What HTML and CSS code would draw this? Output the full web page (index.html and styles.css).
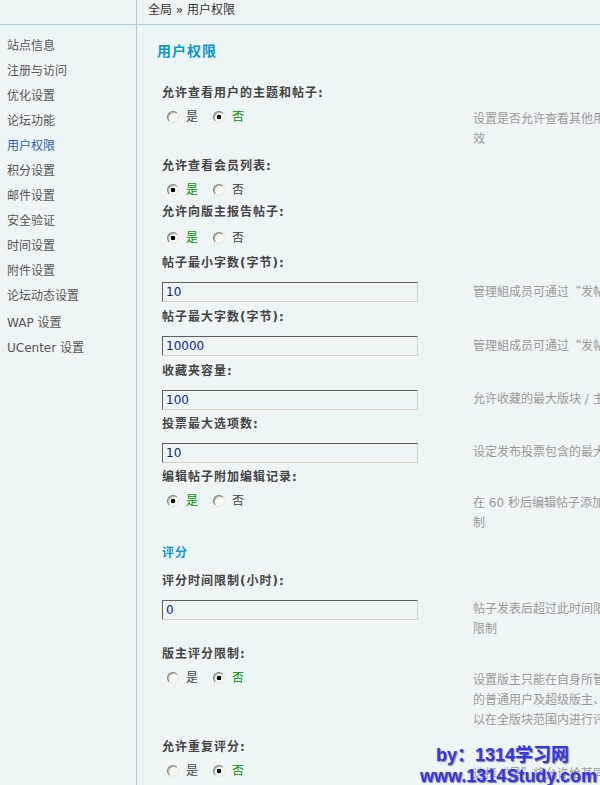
FILE: index.html
```html
<!DOCTYPE html>
<html lang="zh-CN">
<head>
<meta charset="utf-8">
<title>用户权限</title>
<link rel="stylesheet" href="styles.css">
</head>
<body>
<div class="layout">
  <aside class="side">
    <div class="side-top"></div>
    <ul class="menu">
      <li>站点信息</li>
      <li>注册与访问</li>
      <li>优化设置</li>
      <li>论坛功能</li>
      <li class="on">用户权限</li>
      <li>积分设置</li>
      <li>邮件设置</li>
      <li>安全验证</li>
      <li>时间设置</li>
      <li>附件设置</li>
      <li>论坛动态设置</li>
      <li class="wap">WAP 设置</li>
      <li>UCenter 设置</li>
    </ul>
  </aside>
  <main class="main">
    <div class="crumb">全局 &raquo; 用户权限</div>
    <div class="content">
      <h3 class="title">用户权限</h3>

      <div class="item">
        <div class="label">允许查看用户的主题和帖子:</div>
        <div class="row">
          <div class="value">
            <div class="radios">
              <label class="opt"><input type="radio" name="r1" class="radio"><span>是</span></label>
              <label class="opt"><input type="radio" name="r1" class="radio" checked><span>否</span></label>
            </div>
          </div>
          <div class="desc">设置是否允许查看其他用户的主题和帖子，本设置对管理员无效</div>
        </div>
      </div>

      <div class="item">
        <div class="label">允许查看会员列表:</div>
        <div class="row">
          <div class="value">
            <div class="radios">
              <label class="opt"><input type="radio" name="r2" class="radio" checked><span>是</span></label>
              <label class="opt"><input type="radio" name="r2" class="radio"><span>否</span></label>
            </div>
          </div>
          <div class="desc"></div>
        </div>
      </div>

      <div class="item extra">
        <div class="label">允许向版主报告帖子:</div>
        <div class="row">
          <div class="value">
            <div class="radios">
              <label class="opt"><input type="radio" name="r3" class="radio" checked><span>是</span></label>
              <label class="opt"><input type="radio" name="r3" class="radio"><span>否</span></label>
            </div>
          </div>
          <div class="desc"></div>
        </div>
      </div>

      <div class="item">
        <div class="label">帖子最小字数(字节):</div>
        <div class="row row-input">
          <div class="value"><input type="text" class="txt" value="10"></div>
          <div class="desc">管理組成员可通过<span class="lq">“</span>发帖不受限制<span class="rq">”</span>设置不受此限制</div>
        </div>
      </div>

      <div class="item">
        <div class="label">帖子最大字数(字节):</div>
        <div class="row row-input">
          <div class="value"><input type="text" class="txt" value="10000"></div>
          <div class="desc">管理組成员可通过<span class="lq">“</span>发帖不受限制<span class="rq">”</span>设置不受此限制</div>
        </div>
      </div>

      <div class="item">
        <div class="label">收藏夹容量:</div>
        <div class="row row-input">
          <div class="value"><input type="text" class="txt" value="100"></div>
          <div class="desc">允许收藏的最大版块 / 主题数，0 为不限制</div>
        </div>
      </div>

      <div class="item">
        <div class="label">投票最大选项数:</div>
        <div class="row row-input">
          <div class="value"><input type="text" class="txt" value="10"></div>
          <div class="desc">设定发布投票包含的最大选项数</div>
        </div>
      </div>

      <div class="item">
        <div class="label">编辑帖子附加编辑记录:</div>
        <div class="row">
          <div class="value">
            <div class="radios">
              <label class="opt"><input type="radio" name="r4" class="radio" checked><span>是</span></label>
              <label class="opt"><input type="radio" name="r4" class="radio"><span>否</span></label>
            </div>
          </div>
          <div class="desc">在 60 秒后编辑帖子添加编辑记录，管理员编辑帖子不受此限制</div>
        </div>
      </div>

      <div class="section">评分</div>

      <div class="item">
        <div class="label">评分时间限制(小时):</div>
        <div class="row row-input">
          <div class="value"><input type="text" class="txt" value="0"></div>
          <div class="desc">帖子发表后超过此时间限制将不能对此帖评分，设置为零则不限制</div>
        </div>
      </div>

      <div class="item">
        <div class="label">版主评分限制:</div>
        <div class="row">
          <div class="value">
            <div class="radios">
              <label class="opt"><input type="radio" name="r5" class="radio"><span>是</span></label>
              <label class="opt"><input type="radio" name="r5" class="radio" checked><span>否</span></label>
            </div>
          </div>
          <div class="desc">设置版主只能在自身所管辖的版块内进行评分，其他允许评分的普通用户及超级版主、管理员不受此项限制，上述用户均可以在全版块范围内进行评分</div>
        </div>
      </div>

      <div class="item">
        <div class="label">允许重复评分:</div>
        <div class="row">
          <div class="value">
            <div class="radios">
              <label class="opt"><input type="radio" name="r6" class="radio"><span>是</span></label>
              <label class="opt"><input type="radio" name="r6" class="radio" checked><span>否</span></label>
            </div>
          </div>
          <div class="desc">选择<span class="lq">“</span>是<span class="rq">”</span>将允许给某同一用户的帖子重复评分</div>
        </div>
      </div>
    </div>
  </main>
</div>
<div class="watermark">
  <div class="wm1">by：1314学习网</div>
  <div class="wm2">www.1314Study.com</div>
</div>
</body>
</html>
```
FILE: styles.css
```css
html {
  overflow: hidden;
  background: #eef6f5;
}
body {
  margin: 0;
  font: 12px/20px "DejaVu Sans", "Noto Sans CJK SC", sans-serif;
  color: #444;
}
.layout {
  display: flex;
  min-height: 785px;
}
.side {
  width: 136px;
  flex: none;
  border-right: 1px solid #a6cde3;
}
.side-top {
  height: 24px;
  border-bottom: 1px solid #a6cde3;
}
.menu {
  list-style: none;
  margin: 0;
  padding: 9px 0 0 7px;
}
.menu li {
  line-height: 25px;
  color: #555;
  white-space: nowrap;
}
.menu li.on {
  color: #1f5fb5;
}
.menu li.wap {
  margin-top: 2px;
}
.main {
  flex: 1;
  min-width: 0;
}
.crumb {
  height: 24px;
  line-height: 20px;
  border-bottom: 1px solid #a6cde3;
  padding-left: 11px;
  color: #333;
  white-space: nowrap;
}
.content {
  padding: 16px 0 0 20px;
}
.title {
  margin: 0 0 22px;
  font-size: 14px;
  line-height: 20px;
  letter-spacing: 1px;
  font-weight: bold;
  color: #0a99cc;
}
.item {
  padding-left: 5px;
}
.item.extra .row {
  padding-top: 5px;
  padding-bottom: 3px;
}
.label {
  font-weight: bold;
  letter-spacing: 1px;
  line-height: 20px;
  color: #444;
  white-space: nowrap;
}
.row {
  display: flex;
  align-items: flex-start;
  padding-top: 3px;
}
.value {
  width: 311px;
  flex: none;
}
.desc {
  width: 330px;
  flex: none;
  color: #999;
  padding: 3px 0 7px;
}
.lq,
.rq {
  display: inline-block;
  width: 12px;
  font-family: "Noto Sans CJK SC", sans-serif;
}
.lq {
  text-align: right;
}
.rq {
  text-align: left;
}
.row-input .value {
  padding-bottom: 4px;
}
.row-input .desc {
  padding: 5px 0 5px;
}
.radios {
  display: flex;
  align-items: center;
  height: 22px;
  margin-bottom: 1px;
}
.opt {
  display: flex;
  align-items: center;
  margin-right: 10px;
  color: #444;
}
.radio {
  -webkit-appearance: none;
  appearance: none;
  box-sizing: border-box;
  width: 12px;
  height: 12px;
  margin: 0 7px 0 5px;
  border-radius: 50%;
  border: 1px solid;
  border-color: #80807a #e6e6de #e6e6de #80807a;
  background: #f8f8f3;
  box-shadow: inset 1px 1px 0 #b4b4ac;
}
.radio:checked {
  background: radial-gradient(circle at 50% 50%, #000 0 2px, #f8f8f3 2.6px);
}
.radio:checked + span {
  color: #009100;
}
.txt {
  display: block;
  box-sizing: border-box;
  width: 256px;
  height: 20px;
  margin-top: 6px;
  border: 1px solid;
  border-color: #5f5f5f #d4d0c2 #d4d0c2 #5f5f5f;
  background: transparent;
  padding: 0 3px;
  font: 12px "DejaVu Sans", sans-serif;
  color: #0d1d8c;
  outline: none;
}
.section {
  margin: 3px 0 8px;
  padding-left: 5px;
  font-weight: bold;
  letter-spacing: 1px;
  line-height: 20px;
  color: #0a99cc;
}
.watermark {
  position: absolute;
  left: 420px;
  top: 745px;
  font: bold 18px/21px "Liberation Sans", "Noto Sans CJK SC", sans-serif;
  color: #3434f2;
  text-shadow: 1px 1px 1px #808080;
  white-space: nowrap;
}
.wm1 {
  padding-left: 16px;
}
```
